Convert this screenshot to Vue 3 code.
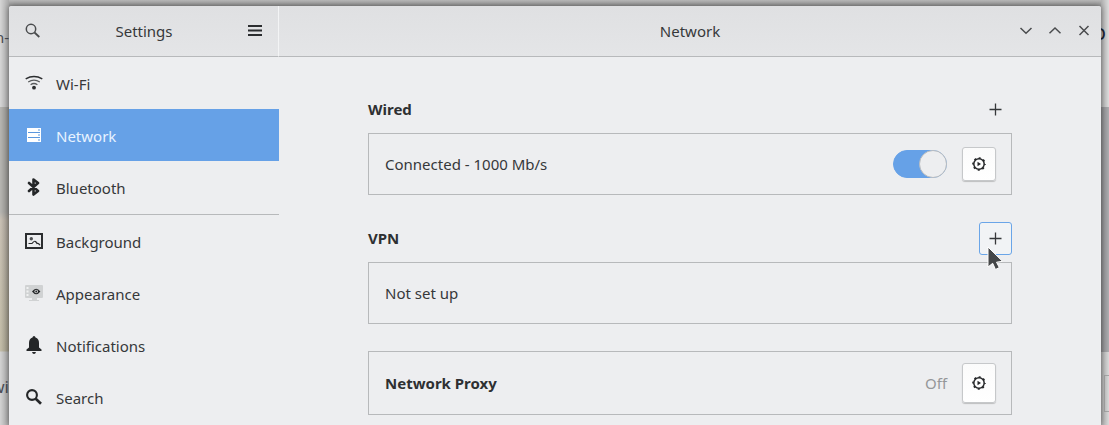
<script setup>
import { ref } from 'vue'

const groups = [
  ['Wi-Fi', 'Network', 'Bluetooth'],
  ['Background', 'Appearance', 'Notifications', 'Search'],
]
const current = ref('Network')
const wired = ref(true)
</script>

<template>
  <div class="desktop">
    <div class="behind left" aria-hidden="true">
      <span class="peek dash">n-</span>
      <span class="peek wi">wi</span>
    </div>
    <div class="window">
      <header class="side-head">
        <button class="flat" aria-label="Search settings">
          <svg width="16" height="16" viewBox="0 0 16 16" fill="none" stroke="#4a4c4e"><circle cx="6" cy="6" r="4.700" stroke-width="1.500" /><path d="M9.500 9.500 14.300 14" stroke-width="1.800" /></svg>
        </button>
        <h1>Settings</h1>
        <button class="flat" aria-label="Menu">
          <svg width="16" height="16" viewBox="0 0 16 16" fill="#2b2d2f"><path d="M1 2h14v2H1zM1 6.500h14v2H1zM1 11h14v2H1z" /></svg>
        </button>
      </header>
      <header class="main-head">
        <h1>Network</h1>
        <div class="controls">
          <button class="flat" aria-label="Minimize"><svg width="14" height="14" viewBox="0 0 14 14"><path d="M1.500 4 7 9.200 12.500 4" /></svg></button>
          <button class="flat" aria-label="Maximize"><svg width="14" height="14" viewBox="0 0 14 14"><path d="M1.500 9.200 7 4l5.500 5.200" /></svg></button>
          <button class="flat" aria-label="Close"><svg width="14" height="14" viewBox="0 0 14 14"><path d="m2.500 2 9 9M11.500 2l-9 9" /></svg></button>
        </div>
      </header>

      <nav>
        <ul v-for="(group, i) in groups" :key="i">
          <li v-for="name in group" :key="name">
            <button class="item" :class="{ active: name === current }" @click="current = name">
              <svg v-if="name === 'Wi-Fi'" width="18" height="18" viewBox="0 0 18 18" fill="none" stroke="#2b2d2f"><path d="M.7 4.900Q9 .2 17.300 4.900" stroke-width="1.500" /><path d="M3.200 8Q9 4.300 14.800 8" stroke="#5a5c5e" stroke-width="1.300" /><path d="M5.600 10.700Q9 8.300 12.400 10.700" stroke="#5a5c5e" stroke-width="1.300" /><circle cx="9" cy="13.700" r="1.900" fill="#2b2d2f" stroke="none" /></svg>
              <svg v-else-if="name === 'Network'" width="18" height="18" viewBox="0 0 18 18"><path d="M2 2h14v14H2z" fill="#fff" /><path d="M3 6.500h12M3 11.500h12" stroke="#5b97de" /><path d="M13 4h2M13 9h2M13 14h2" stroke="#5b97de" stroke-width="1" /></svg>
              <svg v-else-if="name === 'Bluetooth'" width="18" height="18" viewBox="0 0 18 18" fill="none" stroke="#242628" stroke-width="2.600" stroke-linejoin="round" stroke-linecap="round"><path d="m4 5 9 8-4.500 3.500V1.500L13 5l-9 8" /></svg>
              <svg v-else-if="name === 'Background'" width="18" height="18" viewBox="0 0 18 18" fill="none" stroke="#2b2d2f"><path d="M1 2h16v14H1z" stroke-width="2" /><circle cx="6.300" cy="6.800" r="1.700" fill="#4d4f51" stroke="none" /><path d="M3.500 11.500H7q2-3 3.500-2 1 1 1.500 2 1.500-.8 3 1.800" stroke-width="1.200" /></svg>
              <svg v-else-if="name === 'Appearance'" width="18" height="18" viewBox="0 0 18 18"><path d="M1 1h16q1 0 1 1v11q0 1-1 1h-5v2h2v1H4v-1h3v-2H1q-1 0-1-1V2q0-1 1-1z" fill="#d0d2d3" /><path d="M1.500 3h2v2h-2zM1.500 6.500h2v2h-2zM1.500 10h2v2h-2z" fill="#f0f1f2" /><path d="M7 7.500Q11.200 2 15.400 7.500 11.200 13 7 7.500z" fill="#242628" /><circle cx="11.200" cy="7.500" r="1.800" fill="#d0d2d3" /><circle cx="11.200" cy="7.500" r=".9" fill="#242628" /></svg>
              <svg v-else-if="name === 'Notifications'" width="18" height="18" viewBox="0 0 18 18" fill="#242628"><path d="M9 0q1.300 0 1.500 1.500Q14 2.700 14 7v4.500l2.500 2V15h-15v-1.500l2.500-2V7q0-4.300 3.500-5.500Q7.700 0 9 0zM7 16h4q-.5 2-2 2t-2-2z" /></svg>
              <svg v-else width="18" height="18" viewBox="0 0 18 18" fill="none" stroke="#242628"><circle cx="7" cy="7" r="4.900" stroke-width="2.100" /><path d="m10.700 10.700 5.300 5" stroke-width="2.700" /></svg>
              <span>{{ name }}</span>
            </button>
          </li>
        </ul>
      </nav>

      <main>
        <div class="column">
          <section>
            <div class="title">
              <h2>Wired</h2>
              <button class="add" aria-label="Add wired connection"><svg width="13" height="13" viewBox="0 0 13 13"><path d="M6.500.5v12M.5 6.500h12" /></svg></button>
            </div>
            <div class="card">
              <label for="wired">Connected - 1000 Mb/s</label>
              <input id="wired" v-model="wired" type="checkbox" class="switch" />
              <button class="gear" aria-label="Wired options">
                <svg width="16" height="16" viewBox="0 0 16 16"><circle cx="8" cy="8" r="5.200" fill="none" stroke="#242628" stroke-width="1.500" /><circle cx="8" cy="8" r="6" fill="none" stroke="#242628" stroke-width="1.600" stroke-dasharray="2 2.712" stroke-dashoffset="1" /><path d="M6.500 5.700 10 8l-3.500 2.300z" fill="#242628" /></svg>
              </button>
            </div>
          </section>
          <section>
            <div class="title">
              <h2>VPN</h2>
              <button class="add focus" aria-label="Add VPN"><svg width="13" height="13" viewBox="0 0 13 13"><path d="M6.500.5v12M.5 6.500h12" /></svg>
                <svg class="pointer" width="17" height="25" viewBox="0 0 17 25"><path d="M1 1v20l4.700-3.700L8.500 23.500l3.800-2-2.800-5.300 6-.9z" /></svg>
              </button>
            </div>
            <div class="card"><p>Not set up</p></div>
          </section>
          <section class="card proxy">
            <h2>Network Proxy</h2>
            <span class="off">Off</span>
            <button class="gear" aria-label="Proxy options">
              <svg width="16" height="16" viewBox="0 0 16 16"><circle cx="8" cy="8" r="5.200" fill="none" stroke="#242628" stroke-width="1.500" /><circle cx="8" cy="8" r="6" fill="none" stroke="#242628" stroke-width="1.600" stroke-dasharray="2 2.712" stroke-dashoffset="1" /><path d="M6.500 5.700 10 8l-3.500 2.300z" fill="#242628" /></svg>
            </button>
          </section>
        </div>
      </main>
    </div>
    <div class="behind right" aria-hidden="true">
      <span class="peek letter">o</span>
      <span class="cell"></span>
    </div>
  </div>
</template>

<style>
body {
  overflow: hidden;
}
</style>

<style scoped>
*,
*::before {
  box-sizing: border-box;
}
.desktop {
  display: grid;
  grid-template-columns: 9px minmax(0, 1fr) 8px;
  min-height: 100vh;
  background: linear-gradient(#b9b9b9, #999 6px, #ccc 7px);
  font: 15px/20px "Noto Sans", sans-serif;
  color: #36383a;
}
.behind {
  position: relative;
  overflow: hidden;
}
.left {
  background: linear-gradient(90deg, transparent, #0003), linear-gradient(#d5d5d5 107px, #b6b5b1 107px, #b6b5b1 212px, #c9c1b5 220px, #c3bda8 351px, #d2d2d2 352px);
}
.right {
  background: linear-gradient(270deg, transparent, #0003), linear-gradient(#dcdcdc 107px, #adadb0 107px, #adadb0 352px, #d9d9d9 352px);
}
.peek {
  position: absolute;
  color: #4b4d55;
}
.dash {
  top: 27px;
  right: 0;
}
.wi {
  top: 377px;
  right: 0;
  font-size: 17px;
}
.letter {
  top: 22px;
  right: 3px;
  font-size: 21px;
  color: #1d2533;
}
.cell {
  position: absolute;
  top: 375px;
  left: 3px;
  width: 20px;
  height: 37px;
  border: 1px solid #a5a5a5;
}
.window {
  display: grid;
  grid-template: 51px 1fr / 270px minmax(0, 1fr);
  margin-top: 6px;
  background: #edeef0;
  border-radius: 3px 3px 0 0;
  box-shadow: 0 0 6px #0007;
  z-index: 1;
}
header {
  display: flex;
  align-items: center;
  background: linear-gradient(#dfe0e2, #e4e5e7);
  border-bottom: 1px solid #b7b9bb;
}
h1 {
  flex: 1;
  margin: 0;
  font-size: 15px;
  font-weight: 400;
  text-align: center;
}
.side-head {
  padding: 0 15px 0 16px;
  border-right: 1px solid #f3f4f5;
  border-radius: 3px 0 0;
}
.main-head {
  display: grid;
  grid-template-columns: 1fr auto 1fr;
  border-radius: 0 3px 0 0;
}
.main-head h1 {
  grid-column: 2;
}
.controls {
  display: flex;
  justify-content: flex-end;
  gap: 15px;
  padding-right: 10px;
}
button {
  display: flex;
  align-items: center;
  padding: 0;
  border: 0;
  background: none;
  color: inherit;
  font: inherit;
}
svg {
  display: block;
  flex: none;
}
.controls path {
  fill: none;
  stroke: #4a4c4e;
  stroke-width: 1.5;
}
ul {
  margin: 0;
  padding: 0 0 1px;
  list-style: none;
}
ul + ul {
  border-top: 1px solid #b7b9bb;
}
.item {
  gap: 13px;
  width: 100%;
  height: 52px;
  padding: 2px 16px 0;
}
.item svg {
  margin-bottom: 2px;
}
.active {
  background: #66a1e7;
  color: #e8f3ff;
}
main {
  padding: 36px 24px 10px;
}
.column {
  display: grid;
  gap: 27px;
  max-width: 644px;
  margin: 0 auto;
}
.title {
  display: flex;
  align-items: center;
  justify-content: space-between;
  margin-bottom: 7px;
}
h2 {
  margin: 0;
  font-size: 15px;
  font-weight: 700;
  color: #2e3032;
}
.title h2 {
  padding-bottom: 2px;
}
.add {
  position: relative;
  justify-content: center;
  width: 33px;
  height: 33px;
  border: 1px solid transparent;
  border-radius: 3px;
}
.add path {
  fill: none;
  stroke: #36383a;
  stroke-width: 1.3;
}
.focus {
  border-color: #6aa5e8;
  background: #f1f3f5;
}
.pointer {
  position: absolute;
  top: 23px;
  left: 7px;
  z-index: 1;
}
.add .pointer path {
  fill: #444648;
  stroke: #fff;
  stroke-width: 1;
}
.card {
  display: flex;
  align-items: center;
  gap: 15px;
  min-height: 62px;
  padding: 0 16px;
  border: 1px solid #b7b9bb;
}
.card:has(.gear) {
  padding-right: 15px;
}
.card label,
.card h2,
.card p {
  flex: 1;
  margin: 0;
}
.switch {
  appearance: none;
  width: 54px;
  height: 28px;
  margin: 0;
  border: 1px solid #b9bcbf;
  border-radius: 14px;
  background: #d5d7d9;
}
.switch::before {
  content: "";
  display: block;
  width: 28px;
  height: 28px;
  margin: -1px;
  border: 1px solid #b9bcbf;
  border-radius: 50%;
  background: #edeef0;
}
.switch:checked {
  border-color: #66a1e7;
  background: #66a1e7;
}
.switch:checked::before {
  margin-left: 25px;
}
.gear {
  justify-content: center;
  width: 34px;
  height: 34px;
  border: 1px solid #c6c8ca;
  border-radius: 3px;
  background: linear-gradient(#fbfbfb, #fff);
  box-shadow: 0 1px 1px #0003;
}
.proxy {
  min-height: 64px;
}
.proxy .gear {
  height: 40px;
}
.off {
  color: #959799;
}
</style>
